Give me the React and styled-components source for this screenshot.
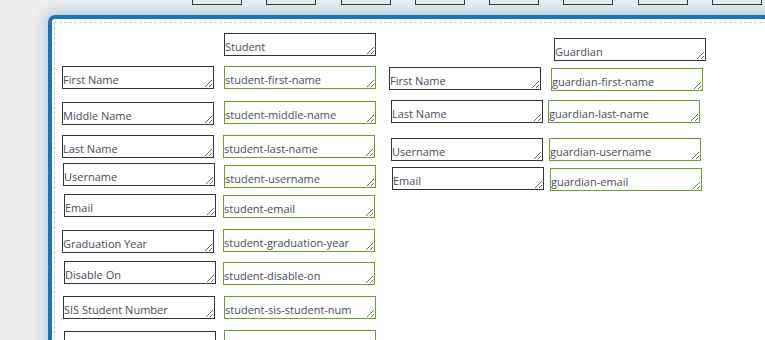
import styled, { createGlobalStyle } from "styled-components";

const GlobalStyle = createGlobalStyle`
  html, body {
    margin: 0;
    padding: 0;
    background: #eeeeee;
    overflow: hidden;
    font-family: "Open Sans", "Liberation Sans", sans-serif;
  }
`;

// mapping nodes on the canvas: [label, left, top, mapped]
const nodes = [
  ["Student", 169, 10, false],
  ["Guardian", 499, 15, false],
  ["First Name", 7, 43, false],
  ["student-first-name", 169, 43, true],
  ["First Name", 334, 44, false],
  ["guardian-first-name", 496, 45, true],
  ["Middle Name", 7, 79, false],
  ["student-middle-name", 169, 78, true],
  ["Last Name", 336, 77, false],
  ["guardian-last-name", 493, 77, true],
  ["Last Name", 7, 112, false],
  ["student-last-name", 168, 112, true],
  ["Username", 336, 115, false],
  ["guardian-username", 494, 115, true],
  ["Username", 8, 140, false],
  ["student-username", 169, 142, true],
  ["Email", 337, 144, false],
  ["guardian-email", 495, 145, true],
  ["Email", 9, 171, false],
  ["student-email", 168, 172, true],
  ["Graduation Year", 7, 207, false],
  ["student-graduation-year", 168, 206, true],
  ["Disable On", 9, 238, false],
  ["student-disable-on", 168, 239, true],
  ["SIS Student Number", 8, 273, false],
  ["student-sis-student-num", 169, 273, true],
  ["State ID", 9, 308, false],
  ["student-state-id", 169, 307, true],
];

const App = () => {
  return (
    <>
      <GlobalStyle />
      <Toolbar>
        {Array.from({ length: 8 }).map((_, i) => (
          <ToolButton key={i} />
        ))}
      </Toolbar>
      <Panel>
        <Canvas>
          {nodes.map(([label, x, y, mapped], i) => (
            <Field
              key={i}
              $mapped={mapped}
              defaultValue={label}
              readOnly
              style={{ left: x, top: y }}
            />
          ))}
        </Canvas>
      </Panel>
    </>
  );
};

const Toolbar = styled.div`
  display: flex;
  align-items: flex-end;
  gap: 24.3px;
  height: 5px;
  padding-left: 192px;
`;

const ToolButton = styled.div`
  flex-shrink: 0;
  width: 50px;
  height: 20px;
  box-sizing: border-box;
  border: 1px solid #333;
  background: #ebebeb;
`;

const Panel = styled.div`
  margin: 10px 0 0 48px;
  width: 900px;
  height: 420px;
  box-sizing: border-box;
  padding: 3px 2px;
  background: #fff;
  border: 4px solid #1a74b6;
  border-radius: 7px;
  box-shadow: 0 0 14px 4px rgba(26, 116, 182, 0.25);
`;

const Canvas = styled.div`
  position: relative;
  height: 100%;
  box-sizing: border-box;
  border: 1px dashed #cccccc;
`;

const Field = styled.textarea`
  position: absolute;
  width: 152px;
  height: 23px;
  box-sizing: border-box;
  margin: 0;
  padding: 5px 0 0 0;
  border: 1px solid ${(p) => (p.$mapped ? "#6b9e2f" : "#333333")};
  border-radius: 0;
  background: #fff;
  color: #4a4a58;
  font-family: "Open Sans", "Liberation Sans", sans-serif;
  font-size: 11px;
  line-height: 15px;
  overflow: hidden;
  white-space: nowrap;
  outline: none;
`;

export default App;
